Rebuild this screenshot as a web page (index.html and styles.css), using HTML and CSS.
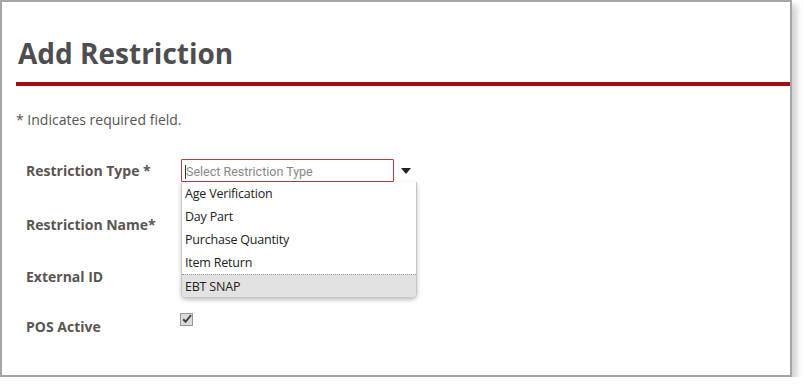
FILE: index.html
```html
<!DOCTYPE html>
<html lang="en">
<head>
    <meta charset="UTF-8">
    <meta name="viewport" content="width=device-width, initial-scale=1.0">
    <title>Add Restriction</title>
    <link rel="stylesheet" href="styles.css">
</head>
<body>
    <div class="panel">
        <h1 class="title">Add Restriction</h1>
        <p class="note">* Indicates required field.</p>

        <div class="form">
            <div class="row">
                <label class="label">Restriction Type *</label>
                <div class="field">
                    <div class="combo">
                        <div class="combo-input">Select Restriction Type</div>
                        <span class="combo-arrow"></span>
                        <ul class="combo-list">
                            <li>Age Verification</li>
                            <li>Day Part</li>
                            <li>Purchase Quantity</li>
                            <li>Item Return</li>
                            <li class="hover">EBT SNAP</li>
                        </ul>
                    </div>
                </div>
            </div>
            <div class="row">
                <label class="label">Restriction Name*</label>
            </div>
            <div class="row">
                <label class="label">External ID</label>
            </div>
            <div class="row">
                <label class="label">POS Active</label>
                <div class="field">
                    <span class="checkbox">
                        <svg width="12" height="12" viewBox="0 0 12 12">
                            <path d="M2.2 6.2 L4.6 8.8 L10 2.2" fill="none" stroke="#444" stroke-width="2"/>
                        </svg>
                    </span>
                </div>
            </div>
        </div>
    </div>
</body>
</html>
```

FILE: styles.css
```css
body, html {
    margin: 0;
    background-color: #ffffff;
    font-family: 'Open Sans', Arial, sans-serif;
}

.panel {
    width: 788px;
    height: 373px;
    border: 2px solid #a6a6a6;
    box-shadow: 5px 5px 6px rgba(0, 0, 0, 0.18);
    background-color: #fff;
}

.title {
    margin: 0 0 0 14px;
    padding: 32px 0 10px 2px;
    font-size: 28px;
    line-height: 38px;
    font-weight: bold;
    color: #4e4e50;
    border-bottom: 4px solid #a50d0d;
}

.note {
    margin: 24px 0 0 14px;
    font-size: 14px;
    line-height: 20px;
    color: #555;
}

.form {
    margin-top: 29px;
    padding-left: 24px;
}

.row {
    display: flex;
    align-items: flex-start;
    height: 52px;
}

.row:nth-child(2),
.row:nth-child(3) {
    padding-top: 2px;
    height: 50px;
}

.label {
    width: 155px;
    font-size: 14px;
    font-weight: bold;
    line-height: 24px;
    color: #5a5552;
}

.field {
    position: relative;
}

.combo {
    position: relative;
    width: 236px;
    height: 24px;
}

.combo-input {
    width: 213px;
    height: 23px;
    box-sizing: border-box;
    border: 1px solid #c0393b;
    border-radius: 1px;
    padding-left: 3px;
    font-family: Roboto, 'Open Sans', sans-serif;
    font-size: 12.5px;
    line-height: 23px;
    color: #888;
}

.combo-input::before {
    content: "";
    display: inline-block;
    width: 1px;
    height: 14px;
    background-color: #333;
    vertical-align: -3px;
}

.combo-arrow {
    position: absolute;
    left: 220px;
    top: 9px;
    width: 0;
    height: 0;
    border-left: 5px solid transparent;
    border-right: 5px solid transparent;
    border-top: 6px solid #222;
}

.combo-list {
    position: absolute;
    left: 0;
    top: 23px;
    width: 234px;
    margin: 0;
    padding: 0;
    list-style: none;
    background-color: #fff;
    border: 1px solid #c8c8c8;
    border-top: none;
    border-radius: 0 0 5px 5px;
    box-shadow: 0 2px 4px rgba(0, 0, 0, 0.25);
    z-index: 5;
    overflow: hidden;
}

.combo-list li {
    height: 23px;
    line-height: 23px;
    padding-left: 3px;
    font-size: 12.5px;
    color: #222;
    letter-spacing: -0.2px;
}

.combo-list li.hover {
    background-color: #e2e2e2;
    border-top: 1px dotted #9a9a9a;
    height: 22px;
}

.checkbox {
    display: block;
    width: 11px;
    height: 11px;
    margin-top: -2px;
    margin-left: -1px;
    border: 1px solid #999;
    background-color: #dcdcdc;
}

.checkbox svg {
    display: block;
    margin-top: -1px;
}
```
